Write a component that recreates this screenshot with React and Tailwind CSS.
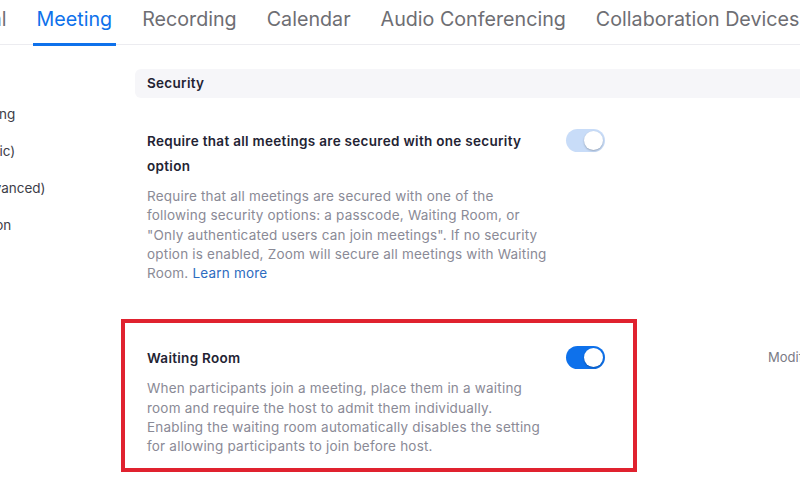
import React from 'react';

const tabs = ['General', 'Meeting', 'Recording', 'Calendar', 'Audio Conferencing', 'Collaboration Devices'];
const sideItems = ['Schedule Meeting', 'In Meeting (Basic)', 'In Meeting (Advanced)', 'Email Notification'];

const Toggle = ({ on, faded }) => (
  <div
    className={`relative w-[39px] h-[23px] rounded-full shrink-0 ${
      faded ? 'bg-[#c8dcf8]' : on ? 'bg-[#0e71eb]' : 'bg-[#d0d0d8]'
    }`}
  >
    <div className="absolute right-[2px] top-[2px] w-[19px] h-[19px] rounded-full bg-white shadow-[0_1px_2px_rgba(0,0,0,0.25)]" />
  </div>
);

const SettingRow = ({ title, children, on, faded, highlight, note }) => (
  <div className="relative flex items-start pl-3">
    <div className="w-[404px] shrink-0">
      <div className="text-[13.5px] font-semibold leading-[25px] tracking-[0.3px] text-[#232333]">{title}</div>
      <div className="mt-[8px] text-[13.5px] leading-[19.3px] tracking-[0.2px] text-[#8a8a96]">{children}</div>
    </div>
    <div className="ml-[15px]">
      <Toggle on={on} faded={faded} />
    </div>
    {note && (
      <div className="ml-[163px] mt-[2px] text-[13px] text-[#7a7a85] whitespace-nowrap">{note}</div>
    )}
    {highlight && (
      <div className="absolute left-[-14px] top-[-27px] w-[516px] h-[153px] border-4 border-[#e0222f] pointer-events-none" />
    )}
  </div>
);

export default function App() {
  return (
    <div
      className="w-[800px] h-[500px] overflow-hidden bg-white"
      style={{ fontFamily: 'Inter, "Liberation Sans", Arial, sans-serif' }}
    >
      {/* Tab bar */}
      <div className="relative h-[45px] border-b border-[#ececf0]">
        <div className="flex gap-[30px] ml-[-66px] whitespace-nowrap text-[19.7px] leading-[39px] text-[#6e6e73]">
          {tabs.map((t) => (
            <div
              key={t}
              className={`relative h-[45px] ${t === 'Meeting' ? 'text-[#0e71eb]' : ''}`}
            >
              {t}
              {t === 'Meeting' && (
                <div className="absolute left-[-4px] right-[-4px] bottom-[-1px] h-[3px] bg-[#0e71eb]" />
              )}
            </div>
          ))}
        </div>
      </div>

      <div className="flex">
        {/* Sidebar (clipped) */}
        <div className="w-[135px] shrink-0 overflow-hidden">
          <div className="ml-[-100px] mt-[60px] flex flex-col gap-[18px] whitespace-nowrap text-[13.5px] leading-[19px] text-[#3d3d48]">
            {sideItems.map((s) => (
              <div key={s}>{s}</div>
            ))}
          </div>
        </div>

        {/* Main */}
        <div className="flex-1 min-w-0 pt-[24px]">
          <div className="h-[29px] bg-[#f6f6f9] rounded-l-md pl-3 flex items-center text-[13.5px] font-semibold tracking-[0.3px] text-[#232333]">
            Security
          </div>

          <div className="mt-[31px]">
            <SettingRow title="Require that all meetings are secured with one security option" faded on>
              Require that all meetings are secured with one of the following security options: a passcode, Waiting Room, or
              "Only authenticated users can join meetings". If no security option is enabled, Zoom will secure all meetings
              with Waiting Room. <span className="text-[#2d6cc0]">Learn more</span>
            </SettingRow>
          </div>

          <div className="mt-[63px]">
            <SettingRow title="Waiting Room" on highlight note="Modified">
              When participants join a meeting, place them in a waiting room and require the host to admit them
              individually. Enabling the waiting room automatically disables the setting for allowing participants to join
              before host.
            </SettingRow>
          </div>
        </div>
      </div>
    </div>
  );
}
